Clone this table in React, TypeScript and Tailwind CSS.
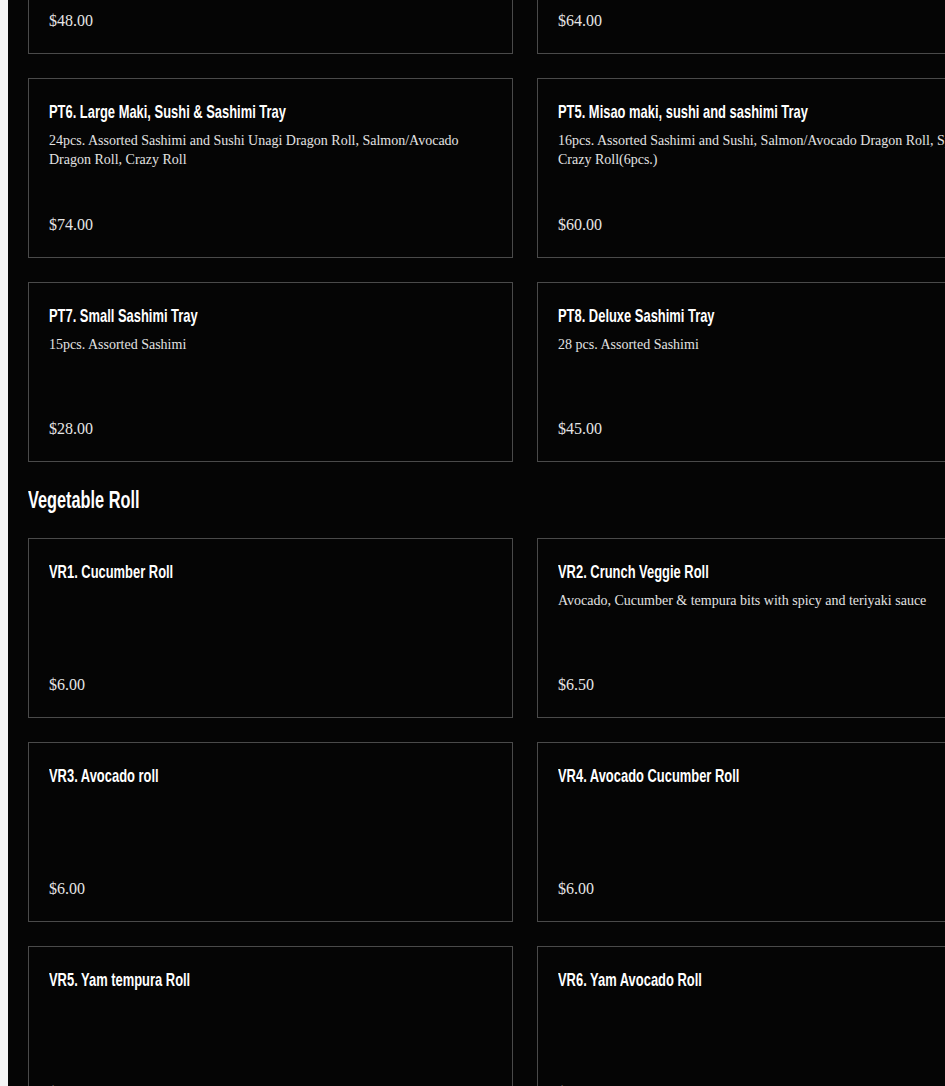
import React from "react";

type Item = { title: string; desc?: string; price: string };

const rows: Item[][] = [
  [
    { title: "", price: "$48.00" },
    { title: "", price: "$64.00" },
  ],
  [
    {
      title: "PT6. Large Maki, Sushi & Sashimi Tray",
      desc: "24pcs. Assorted Sashimi and Sushi Unagi Dragon Roll, Salmon/Avocado Dragon Roll, Crazy Roll",
      price: "$74.00",
    },
    {
      title: "PT5. Misao maki, sushi and sashimi Tray",
      desc: "16pcs. Assorted Sashimi and Sushi, Salmon/Avocado Dragon Roll, Spicy Roll, Crazy Roll(6pcs.)",
      price: "$60.00",
    },
  ],
  [
    { title: "PT7. Small Sashimi Tray", desc: "15pcs. Assorted Sashimi", price: "$28.00" },
    { title: "PT8. Deluxe Sashimi Tray", desc: "28 pcs. Assorted Sashimi", price: "$45.00" },
  ],
];

const veg: Item[][] = [
  [
    { title: "VR1. Cucumber Roll", price: "$6.00" },
    {
      title: "VR2. Crunch Veggie Roll",
      desc: "Avocado, Cucumber & tempura bits with spicy and teriyaki sauce",
      price: "$6.50",
    },
  ],
  [
    { title: "VR3. Avocado roll", price: "$6.00" },
    { title: "VR4. Avocado Cucumber Roll", price: "$6.00" },
  ],
  [
    { title: "VR5. Yam tempura Roll", price: "$6.00" },
    { title: "VR6. Yam Avocado Roll", price: "$6.00" },
  ],
];

const titleFont = "font-['Liberation_Sans',Arial,sans-serif]";
const serif = "font-['Liberation_Serif','Times_New_Roman',serif]";

function Card({ item }: { item: Item }) {
  return (
    <div className="h-[180px] border border-[#4a4a4a] px-5 pt-[21px] pb-5 flex flex-col">
      <div className="h-6 whitespace-nowrap">
        <span
          className={`${titleFont} inline-block origin-left scale-x-[0.68] font-bold text-[19px] leading-6 text-white`}
        >
          {item.title}
        </span>
      </div>
      <div className={`${serif} text-[14px] leading-[19px] text-[#e2e2e2] mt-[7px]`}>{item.desc}</div>
      <div className={`${serif} text-base leading-6 text-[#e6e6e6] mt-auto`}>{item.price}</div>
    </div>
  );
}

function Grid({ data }: { data: Item[][] }) {
  return (
    <div className="grid grid-cols-[485px_485px] gap-x-6 gap-y-[24px]">
      {data.flat().map((it, i) => (
        <Card key={i} item={it} />
      ))}
    </div>
  );
}

export default function App() {
  return (
    <div className="w-[945px] h-[1086px] overflow-hidden flex bg-[#050505]">
      <div className="w-2 shrink-0 bg-[#f4f4f4]" />
      <div className="flex-1 pl-5 overflow-hidden">
        <div className="w-[994px] -mt-[126px]">
          <Grid data={rows} />
          <h2 className="mt-[22px] mb-[22px] h-8 whitespace-nowrap">
            <span
              className={`${titleFont} inline-block origin-left scale-x-[0.68] font-bold text-[24px] leading-8 text-white`}
            >
              Vegetable Roll
            </span>
          </h2>
          <Grid data={veg} />
        </div>
      </div>
    </div>
  );
}
